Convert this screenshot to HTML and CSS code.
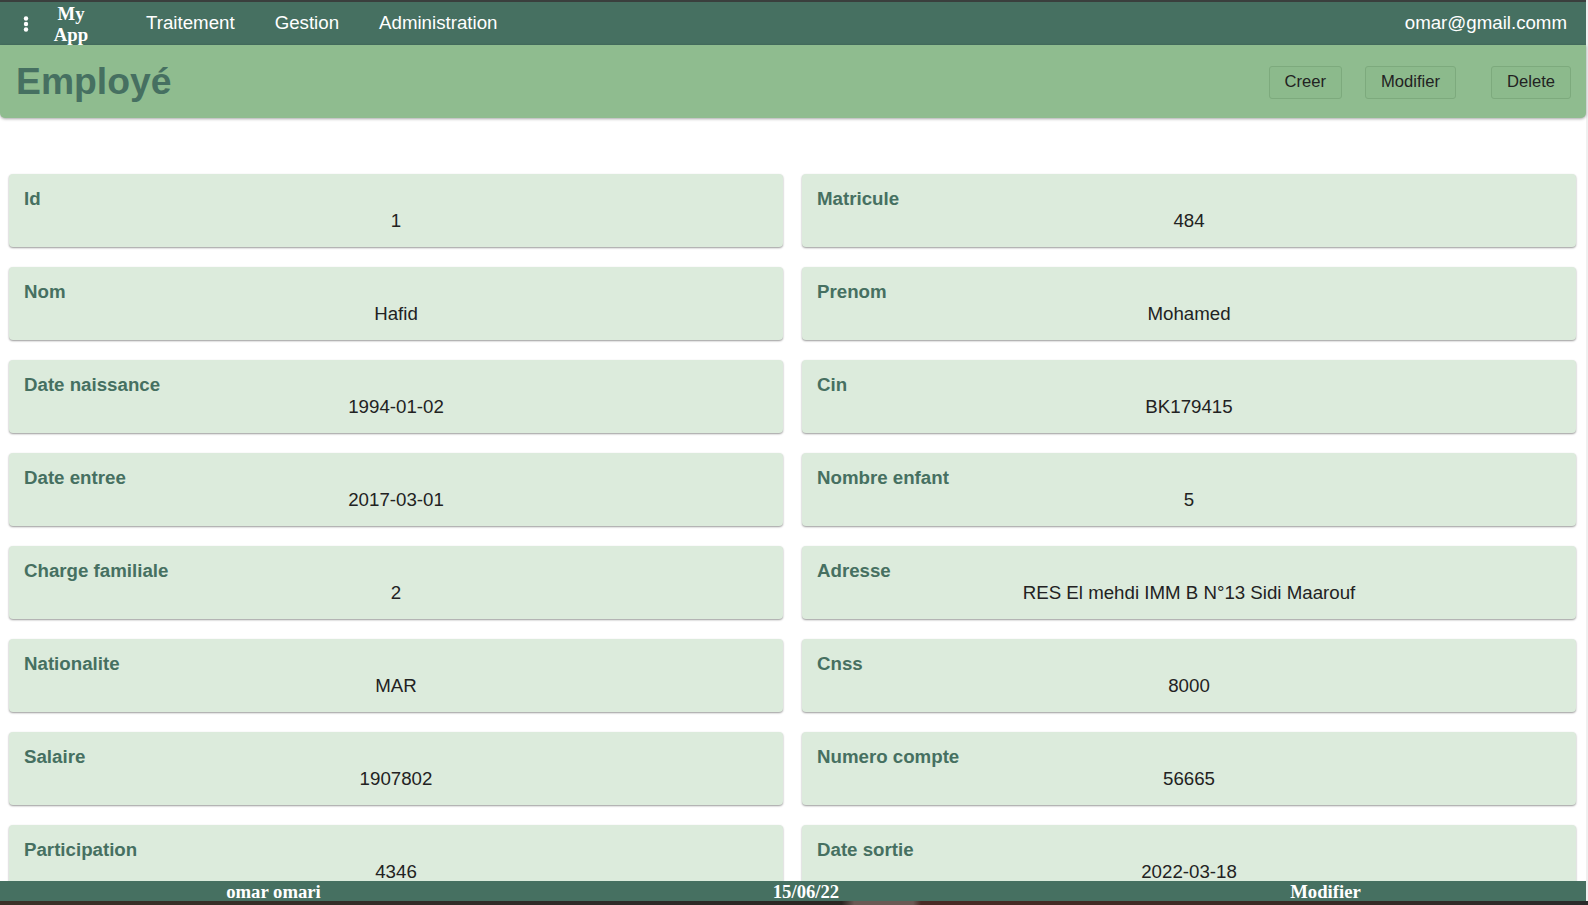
FILE: index.html
```html
<!DOCTYPE html>
<html lang="fr">
<head>
<meta charset="utf-8">
<title>Employé</title>
<link rel="stylesheet" href="styles.css">
</head>
<body>
<div class="page">
  <nav class="nav">
    <div class="nav-left">
      <span class="menu-icon">
        <svg width="6" height="16" viewBox="0 0 6 16"><circle cx="3" cy="2.5" r="2.2" fill="#fff"/><circle cx="3" cy="8" r="2.2" fill="#fff"/><circle cx="3" cy="13.5" r="2.2" fill="#fff"/></svg>
      </span>
      <span class="brand">My<br>App</span>
      <a class="nav-link">Traitement</a>
      <a class="nav-link">Gestion</a>
      <a class="nav-link">Administration</a>
    </div>
    <div class="nav-user">omar@gmail.comm</div>
  </nav>

  <header class="header">
    <h1 class="title">Employé</h1>
    <div class="actions">
      <button class="btn">Creer</button>
      <button class="btn btn-mid">Modifier</button>
      <button class="btn btn-last">Delete</button>
    </div>
  </header>

  <main class="grid">
    <div class="card"><div class="label">Id</div><div class="value">1</div></div>
    <div class="card"><div class="label">Matricule</div><div class="value">484</div></div>
    <div class="card"><div class="label">Nom</div><div class="value">Hafid</div></div>
    <div class="card"><div class="label">Prenom</div><div class="value">Mohamed</div></div>
    <div class="card"><div class="label">Date naissance</div><div class="value">1994-01-02</div></div>
    <div class="card"><div class="label">Cin</div><div class="value">BK179415</div></div>
    <div class="card"><div class="label">Date entree</div><div class="value">2017-03-01</div></div>
    <div class="card"><div class="label">Nombre enfant</div><div class="value">5</div></div>
    <div class="card"><div class="label">Charge familiale</div><div class="value">2</div></div>
    <div class="card"><div class="label">Adresse</div><div class="value">RES El mehdi IMM B N°13 Sidi Maarouf</div></div>
    <div class="card"><div class="label">Nationalite</div><div class="value">MAR</div></div>
    <div class="card"><div class="label">Cnss</div><div class="value">8000</div></div>
    <div class="card"><div class="label">Salaire</div><div class="value">1907802</div></div>
    <div class="card"><div class="label">Numero compte</div><div class="value">56665</div></div>
    <div class="card"><div class="label">Participation</div><div class="value">4346</div></div>
    <div class="card"><div class="label">Date sortie</div><div class="value">2022-03-18</div></div>
  </main>
</div>

<footer class="footer">
  <div class="footer-bar">
    <span class="f-cell">omar omari</span>
    <span class="f-cell">15/06/22</span>
    <span class="f-cell">Modifier</span>
  </div>
  <div class="footer-strip"></div>
</footer>
</body>
</html>
```

FILE: styles.css
```css
html, body {
  margin: 0;
  padding: 0;
  overflow: hidden;
  height: 100%;
}

body {
  background: #f0f0f0;
  font-family: "Liberation Sans", Arial, sans-serif;
}

.page {
  width: 1586px;
  min-height: 100%;
  background: #ffffff;
}

.nav {
  height: 43px;
  border-top: 2px solid #3a3f3d;
  background: #467061;
  display: flex;
  align-items: center;
  justify-content: space-between;
  color: #ffffff;
}

.nav-left {
  display: flex;
  align-items: center;
  height: 100%;
}

.menu-icon {
  display: flex;
  width: 6px;
  margin-left: 23px;
  margin-top: 1px;
}

.brand {
  font-family: "Liberation Serif", "Times New Roman", serif;
  font-weight: bold;
  font-size: 18.7px;
  line-height: 21px;
  text-align: center;
  margin-left: 22px;
  width: 40px;
}

.nav-link {
  font-size: 18.7px;
  color: #ffffff;
  margin-left: 40px;
  line-height: 22px;
  padding-bottom: 2px;
}

.nav-link:first-of-type {
  margin-left: 55px;
}

.nav-user {
  font-size: 18.7px;
  margin-right: 19px;
  padding-bottom: 2px;
}

.header {
  height: 73px;
  background: #8fbc8f;
  border-radius: 0 0 5px 5px;
  box-shadow: 0 1px 3px rgba(0, 0, 0, 0.35);
  display: flex;
  align-items: center;
  justify-content: space-between;
  padding: 0 15px 0 16px;
}

.title {
  margin: 0;
  font-size: 37.3px;
  font-weight: bold;
  color: #467061;
  line-height: 44px;
  margin-top: -2px;
}

.actions {
  display: flex;
  align-items: center;
}

.btn {
  font-family: "Liberation Sans", Arial, sans-serif;
  font-size: 16.6px;
  color: #222;
  background: #8cba8c;
  border: 1px solid #7daa7d;
  border-radius: 3px;
  height: 33px;
  padding: 0 15px;
  margin-top: 1px;
}

.btn-mid {
  margin-left: 23px;
}

.btn-last {
  margin-left: 35px;
}

.grid {
  display: grid;
  grid-template-columns: 1fr 1fr;
  column-gap: 19px;
  row-gap: 20px;
  padding: 0 10px 60px 9px;
  margin-top: 56px;
}

.card {
  box-sizing: border-box;
  height: 73px;
  background: #dcebdc;
  border-radius: 4px;
  box-shadow: 0 1px 2px rgba(0, 0, 0, 0.4);
  padding: 14px 15px 0 15px;
}

.label {
  font-size: 18.7px;
  font-weight: bold;
  color: #467061;
  line-height: 22px;
}

.value {
  font-size: 18.7px;
  color: #222;
  line-height: 22px;
  text-align: center;
  margin-top: 0;
}

.footer {
  position: fixed;
  left: 0;
  right: 0;
  bottom: 0;
}

.footer-bar {
  width: 1586px;
  height: 20px;
  background: #467061;
  display: grid;
  grid-template-columns: 547px 518px 1fr;
  font-family: "Liberation Serif", "Times New Roman", serif;
  font-weight: bold;
  font-size: 18.7px;
  line-height: 21px;
  color: #ffffff;
}

.f-cell {
  text-align: center;
}

.footer-strip {
  height: 4px;
  background: linear-gradient(to right, #3b3027 0%, #2e2a28 40%, #2a2622 53%, #6b5a55 53.8%, #6b5a55 57.5%, #4a2a25 58%, #3a2a24 80%, #2a2a2a 100%);
}
```
